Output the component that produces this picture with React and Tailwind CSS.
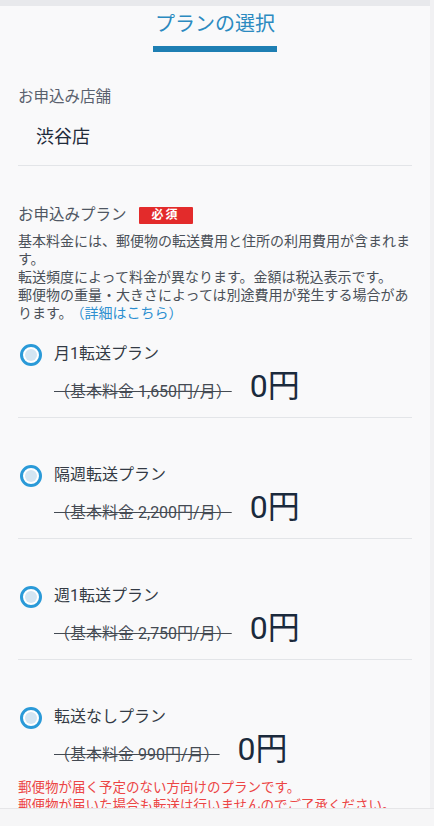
const plans = [
  { name: '月1転送プラン', base: '1,650' },
  { name: '隔週転送プラン', base: '2,200' },
  { name: '週1転送プラン', base: '2,750' },
  { name: '転送なしプラン', base: '990', note: true },
];

function Radio() {
  return (
    <div className="w-[22px] h-[22px] shrink-0 rounded-full border-[3px] border-[#2a9ad8] bg-white p-[2px]">
      <div className="w-full h-full rounded-full bg-[#d3e5f2]" />
    </div>
  );
}

function PlanRow({ plan, first, last }) {
  const top = first ? 'pt-[21px]' : 'pt-[46px]';
  return (
    <div className={last ? top : `${top} pb-[14px] border-b border-[#e3e5e8]`}>
      <div className="flex gap-[12px] pl-[2px]">
        <div className="pt-[1px]">
          <Radio />
        </div>
        <div className="flex flex-col">
          <div className="text-[16px] leading-[22px] text-[#333a44]">{plan.name}</div>
          <div className="flex items-baseline mt-[4px]">
            <span className="text-[16px] leading-[22px] text-[#444a52] line-through">
              （基本料金 {plan.base}円/月）
            </span>
            <span className="ml-[18px] text-[32px] leading-[34px] text-[#1b2a3c]">0円</span>
          </div>
        </div>
      </div>
      {plan.note && (
        <div className="mt-[12px] text-[13.5px] leading-[18px] text-[#ec4545]">
          <p>郵便物が届く予定のない方向けのプランです。</p>
          <p className="whitespace-nowrap">郵便物が届いた場合も転送は行いませんのでご了承ください。</p>
        </div>
      )}
    </div>
  );
}

export default function App() {
  return (
    <div
      className="min-h-screen h-[826px] overflow-hidden flex bg-[#f9f9fa]"
      style={{ fontFamily: 'Roboto, "Noto Sans CJK JP", sans-serif' }}
    >
      <div className="flex-1 flex flex-col">
        <div className="h-[6px] bg-[#e8e9ec]" />
        <div className="flex flex-col items-center">
          <h1 className="mt-[4px] text-[20px] leading-[28px] text-[#2b8ac0]">プランの選択</h1>
          <div className="mt-[8px] w-[124px] h-[6px] bg-[#1e7fb3]" />
        </div>

        <div className="px-[18px]">
          <div className="mt-[35px] text-[15.5px] leading-[20px] text-[#59616e]">お申込み店舗</div>
          <div className="mt-[18px] pl-[18px] text-[18px] leading-[24px] text-[#1f2b3a]">渋谷店</div>
          <div className="mt-[16px] border-b border-[#e3e5e8]" />

          <div className="mt-[38px] flex items-center">
            <span className="text-[15.5px] leading-[22px] text-[#4f5763]">お申込みプラン</span>
            <span className="ml-[12px] w-[54px] h-[17px] flex items-center justify-center bg-[#e32b2b] text-white text-[12px] font-bold rounded-[1px] tracking-[2px]">
              必須
            </span>
          </div>

          <div className="mt-[6px] text-[14px] leading-[18px] text-[#4a5058]">
            <p>基本料金には、郵便物の転送費用と住所の利用費用が含まれます。</p>
            <p>転送頻度によって料金が異なります。金額は税込表示です。</p>
            <p>
              郵便物の重量・大きさによっては別途費用が発生する場合があります。<span className="ml-[5px] text-[#2d8fd0]">（詳細はこちら）</span>
            </p>
          </div>

          {plans.map((p, i) => (
            <PlanRow key={p.name} plan={p} first={i === 0} last={i === plans.length - 1} />
          ))}
        </div>
      </div>
      <div className="w-[4px] bg-[#f1f1f3]" />
      <div className="fixed left-0 right-0 bottom-0 h-[18px] bg-[#f6f6f7] border-t border-[#e6e6e8]" />
    </div>
  );
}
